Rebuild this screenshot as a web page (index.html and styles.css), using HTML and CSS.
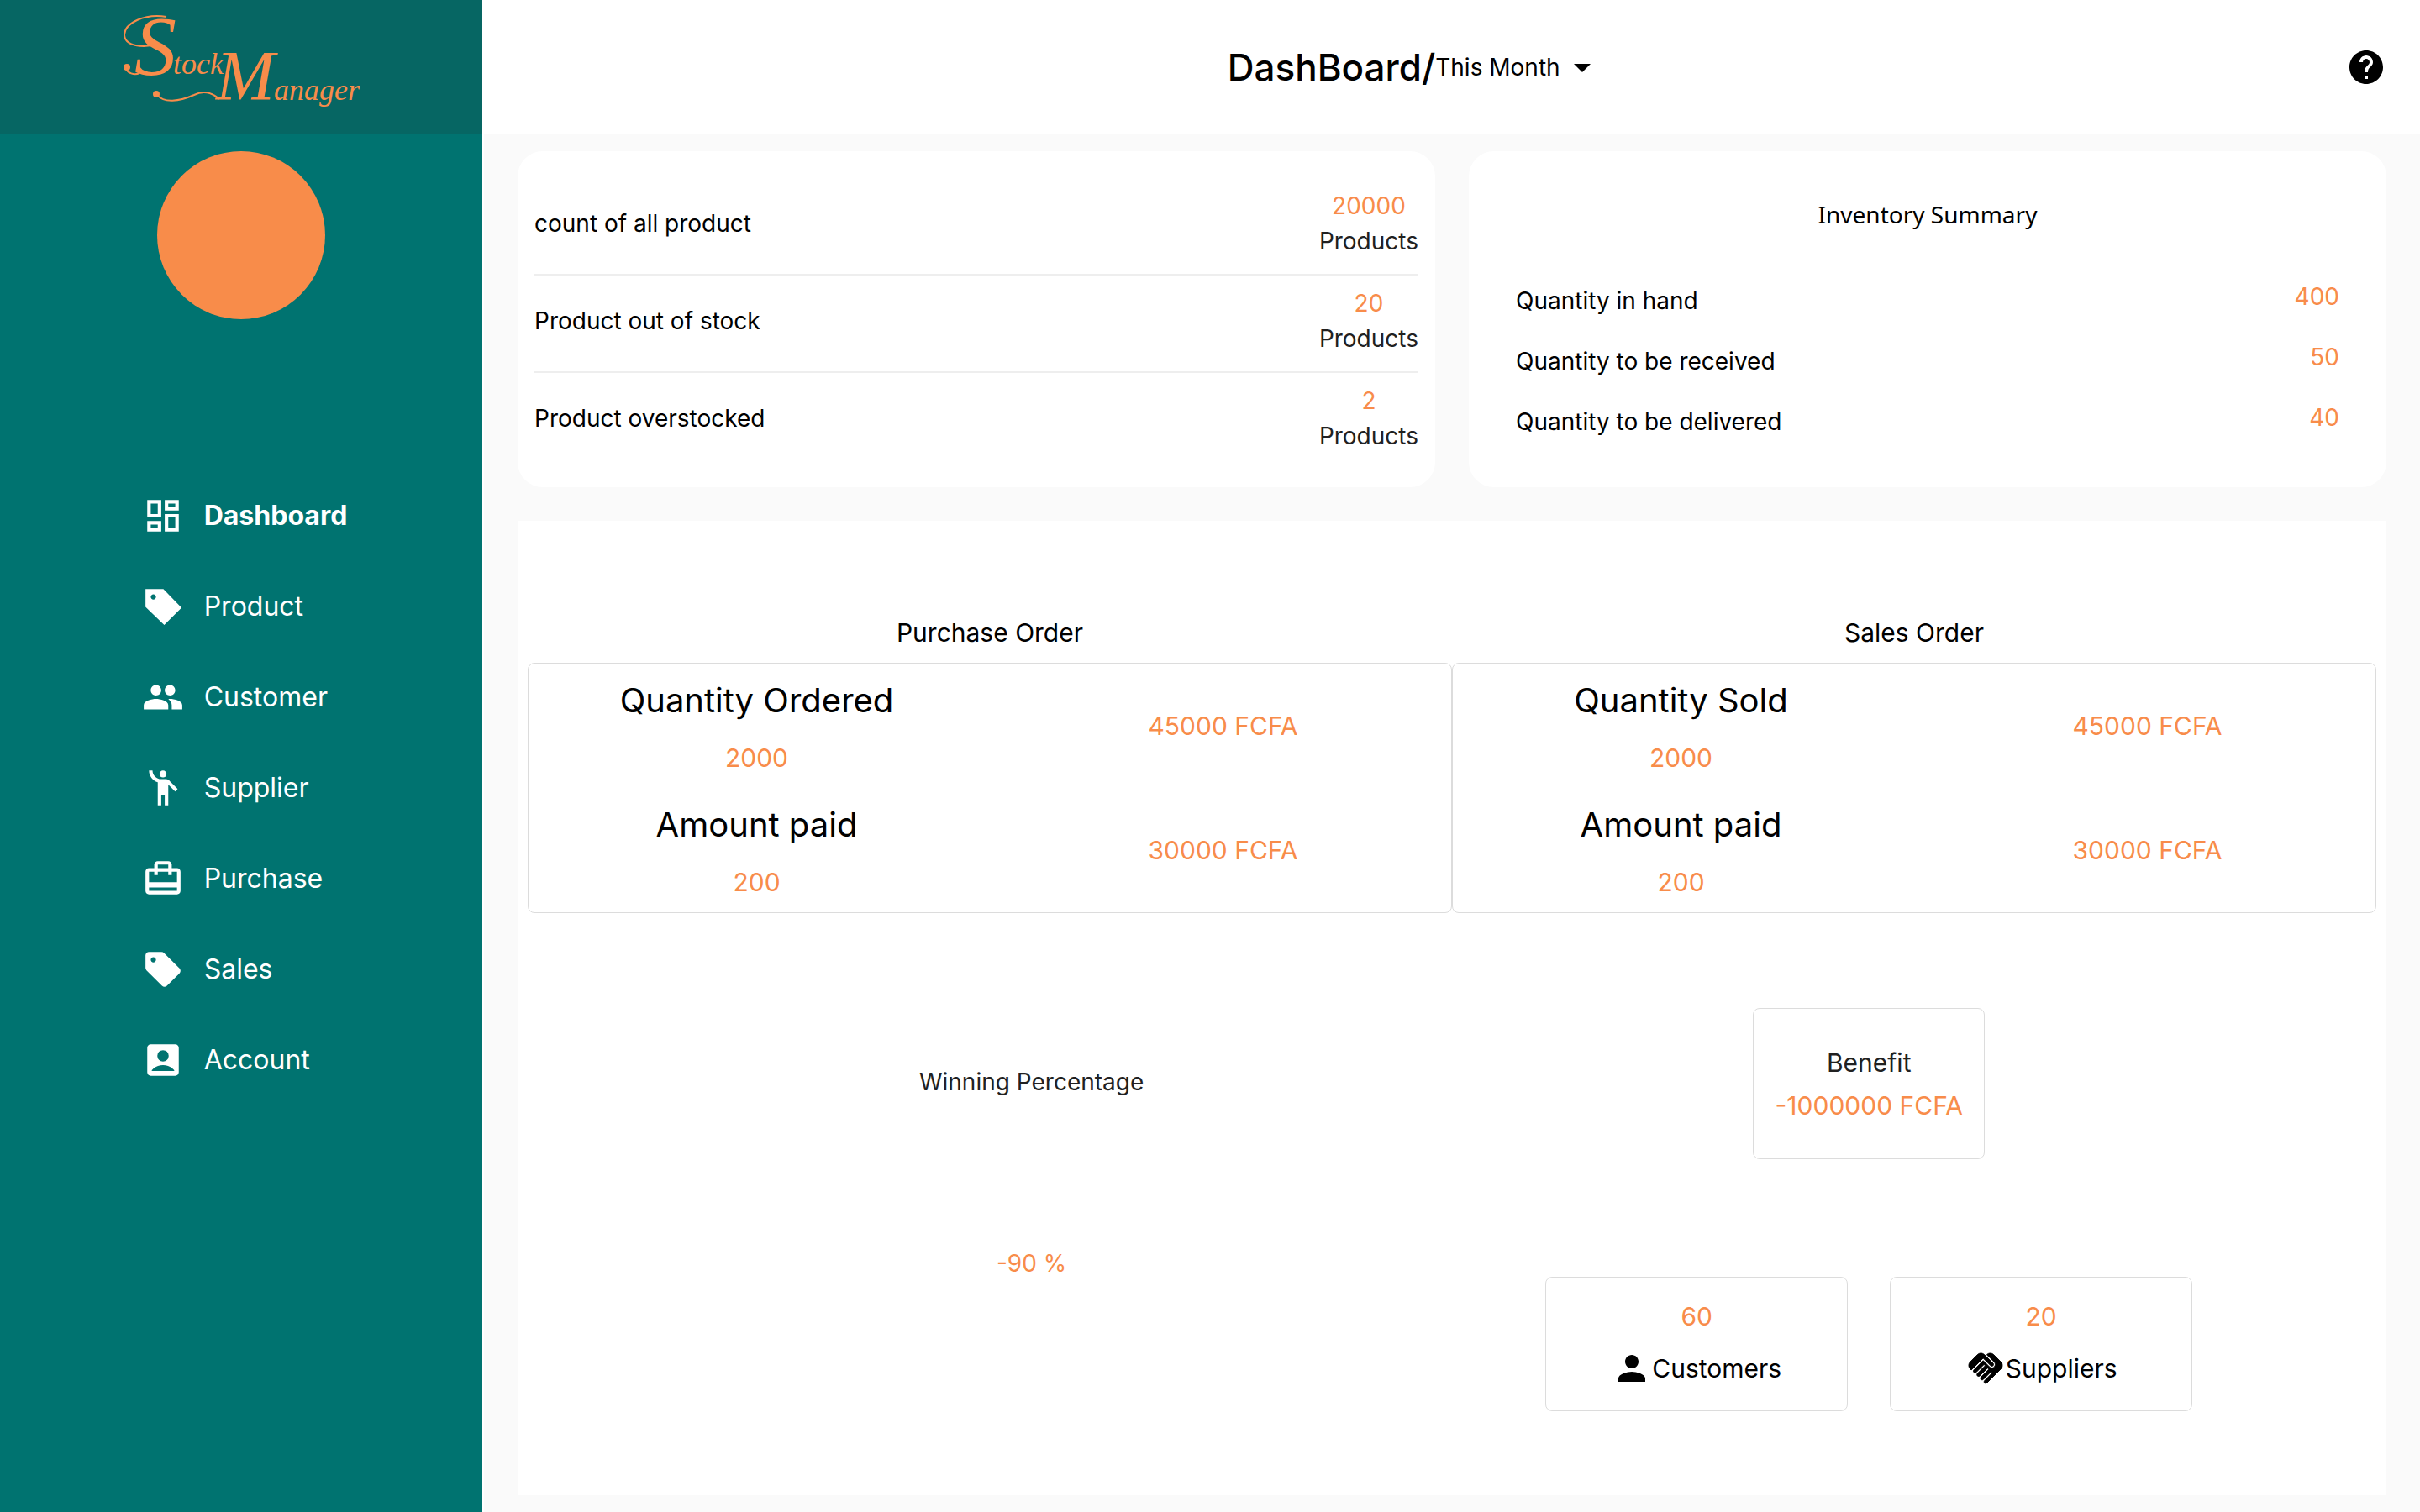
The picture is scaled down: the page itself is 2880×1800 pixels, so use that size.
FILE: index.html
```html
<!DOCTYPE html>
<html lang="en">
<head>
<meta charset="utf-8">
<meta name="viewport" content="width=device-width, initial-scale=1">
<title>Stock Manager</title>
<link rel="stylesheet" href="styles.css">
</head>
<body>
<div class="app">
  <aside class="sidebar">
    <a class="brand" href="#" aria-label="Stock Manager">
      <svg class="brand-logo" viewBox="0 0 290 150">
        <text class="logo-s" x="18" y="83">S</text>
        <text class="logo-word" x="64" y="83">tock</text>
        <text class="logo-m" x="115" y="114">M</text>
        <text class="logo-word" x="184" y="114">anager</text>
        <path class="logo-swash" d="M56 15C30 11 7 22 6 36c0 14 22 17 42 11"/>
        <path class="logo-swash" d="M24 82C18 85 9 82 8 76"/>
        <circle cx="9" cy="75" r="4"/>
        <path class="logo-swash" d="M45 108c8 10 26 8 44 0 10-5 20-4 30 5"/>
        <circle cx="44" cy="107" r="4"/>
      </svg>
    </a>
    <div class="avatar"></div>
    <nav class="nav" aria-label="Main">
      <a class="nav-link active" href="#"><svg class="nav-icon" viewBox="0 0 24 24"><path d="M19 5v2h-4V5h4M9 5v6H5V5h4m10 8v6h-4v-6h4M9 17v2H5v-2h4M21 3h-8v6h8V3zM11 3H3v10h8V3zm10 8h-8v10h8V11zm-10 4H3v6h8v-6z"/></svg>Dashboard</a>
      <a class="nav-link" href="#"><svg class="nav-icon" viewBox="0 0 24 24"><path d="M12.2 2H2v10.2l10.7 10.4 9.9-9.9L12.2 2zM6.5 8C5.67 8 5 7.33 5 6.5S5.67 5 6.5 5 8 5.67 8 6.5 7.33 8 6.5 8z"/></svg>Product</a>
      <a class="nav-link" href="#"><svg class="nav-icon" viewBox="0 0 24 24"><path d="M16 11c1.66 0 2.99-1.34 2.99-3S17.66 5 16 5c-1.66 0-3 1.34-3 3s1.34 3 3 3zm-8 0c1.66 0 2.99-1.34 2.99-3S9.66 5 8 5C6.34 5 5 6.34 5 8s1.34 3 3 3zm0 2c-2.33 0-7 1.17-7 3.5V19h14v-2.500c0-2.330-4.670-3.500-7-3.500zm8 0c-.29 0-.62.02-.97.05 1.160.84 1.970 1.970 1.970 3.450V19h6v-2.500c0-2.330-4.670-3.500-7-3.500z"/></svg>Customer</a>
      <a class="nav-link" href="#"><svg class="nav-icon" viewBox="0 0 24 24"><circle cx="12" cy="4" r="2"/><path d="M15.890 8.110C15.500 7.720 14.830 7 13.530 7h-2.540C8.240 6.990 6 4.750 6 2H4c0 3.160 2.110 5.840 5 6.710V22h2v-6h2v6h2V10.050L18.950 14l1.410-1.410-4.470-4.480z"/></svg>Supplier</a>
      <a class="nav-link" href="#"><svg class="nav-icon" viewBox="0 0 24 24"><path d="M20 6h-3V4c0-1.110-.89-2-2-2H9c-1.110 0-2 .89-2 2v2H4c-1.110 0-2 .89-2 2v11c0 1.110.89 2 2 2h16c1.110 0 2-.89 2-2V8c0-1.110-.89-2-2-2zM9 4h6v2H9V4zm11 15H4v-2h16v2zm0-5H4V8h3v2h2V8h6v2h2V8h3v6z"/></svg>Purchase</a>
      <a class="nav-link" href="#"><svg class="nav-icon" viewBox="0 0 24 24"><path d="M21.410 11.410l-8.830-8.830C12.210 2.210 11.700 2 11.170 2H4c-1.100 0-2 .9-2 2v7.170c0 .53.21 1.040.59 1.410l8.830 8.830c.78.78 2.050.78 2.830 0l7.170-7.170c.78-.78.78-2.040-.01-2.830zM6.500 8C5.670 8 5 7.330 5 6.500S5.670 5 6.500 5 8 5.670 8 6.500 7.330 8 6.500 8z"/></svg>Sales</a>
      <a class="nav-link" href="#"><svg class="nav-icon" viewBox="0 0 24 24"><path fill-rule="evenodd" d="M5 3h14c1.100 0 2 .9 2 2v14c0 1.100-.9 2-2 2H5c-1.100 0-2-.9-2-2V5c0-1.100.9-2 2-2zM12 6.300a3.250 3.250 0 1 0 0 6.500 3.250 3.250 0 1 0 0-6.500zM5.600 18.300h12.800v-.5C17 16 14.400 14.900 12 14.900s-5 1.100-6.400 2.900z"/></svg>Account</a>
    </nav>
  </aside>

  <div class="page">
    <header class="topbar">
      <div class="topbar-title">
        <h1 class="title">DashBoard/</h1>
        <div class="period">
          <select class="period-select" aria-label="Period"><option>This Month</option></select>
          <svg class="period-arrow" viewBox="0 0 24 24"><path d="M7 10l5 5 5-5z"/></svg>
        </div>
      </div>
      <button class="help" type="button" aria-label="Help"><svg class="icon" viewBox="0 0 24 24"><path d="M12 2C6.480 2 2 6.480 2 12s4.480 10 10 10 10-4.480 10-10S17.520 2 12 2zm1 17h-2v-2h2v2zm2.070-7.750l-.9.92C13.450 12.900 13 13.500 13 15h-2v-.5c0-1.100.45-2.100 1.170-2.830l1.240-1.260c.37-.36.59-.86.59-1.410 0-1.100-.9-2-2-2s-2 .9-2 2H8c0-2.210 1.790-4 4-4s4 1.790 4 4c0 .88-.36 1.680-.93 2.250z"/></svg></button>
    </header>

    <main class="content">
      <div class="summary">
        <section class="card stock">
          <div class="stock-row"><span>count of all product</span><div class="stock-value"><span class="accent">20000</span><span class="muted">Products</span></div></div>
          <div class="stock-row"><span>Product out of stock</span><div class="stock-value"><span class="accent">20</span><span class="muted">Products</span></div></div>
          <div class="stock-row"><span>Product overstocked</span><div class="stock-value"><span class="accent">2</span><span class="muted">Products</span></div></div>
        </section>
        <section class="card inventory">
          <h2 class="inventory-title">Inventory Summary</h2>
          <div class="inventory-list">
            <div class="inventory-row"><span class="inventory-label">Quantity in hand</span><span class="inventory-value">400</span></div>
            <div class="inventory-row"><span class="inventory-label">Quantity to be received</span><span class="inventory-value">50</span></div>
            <div class="inventory-row"><span class="inventory-label">Quantity to be delivered</span><span class="inventory-value">40</span></div>
          </div>
        </section>
      </div>

      <section class="panel">
        <div class="orders">
          <section class="order">
            <h2 class="order-title">Purchase Order</h2>
            <div class="order-box">
              <div class="order-item"><h3 class="order-name">Quantity Ordered</h3><span class="amount">2000</span></div>
              <span class="amount">45000 FCFA</span>
              <div class="order-item"><h3 class="order-name">Amount paid</h3><span class="amount">200</span></div>
              <span class="amount">30000 FCFA</span>
            </div>
          </section>
          <section class="order">
            <h2 class="order-title">Sales Order</h2>
            <div class="order-box">
              <div class="order-item"><h3 class="order-name">Quantity Sold</h3><span class="amount">2000</span></div>
              <span class="amount">45000 FCFA</span>
              <div class="order-item"><h3 class="order-name">Amount paid</h3><span class="amount">200</span></div>
              <span class="amount">30000 FCFA</span>
            </div>
          </section>
        </div>

        <div class="results">
          <div class="winning">
            <span class="muted">Winning Percentage</span>
            <span class="accent">-90 %</span>
          </div>
          <div class="totals">
            <div class="box benefit"><span class="benefit-label">Benefit</span><span class="amount">-1000000 FCFA</span></div>
            <div class="people">
              <div class="box person"><span class="amount">60</span><span class="person-label"><svg class="icon" viewBox="0 0 24 24"><path d="M12 12c2.210 0 4-1.790 4-4s-1.790-4-4-4-4 1.790-4 4 1.790 4 4 4zm0 2c-2.670 0-8 1.340-8 4v2h16v-2c0-2.660-5.330-4-8-4z"/></svg>Customers</span></div>
              <div class="box person"><span class="amount">20</span><span class="person-label"><svg class="icon" viewBox="0 0 24 24"><path stroke="currentColor" stroke-width=".45" stroke-linejoin="round" d="M16.480 10.410c-.39.39-1.040.39-1.430 0l-4.470-4.460-7.050 7.040-.66-.63c-1.170-1.170-1.170-3.070 0-4.240l4.240-4.240c1.170-1.170 3.070-1.170 4.240 0L16.480 9c.39.39.39 1.020 0 1.410zm.7-2.120c.78.78.78 2.050 0 2.830-1.270 1.270-2.610.22-2.830 0l-3.760-3.760-5.570 5.570c-.39.39-.39 1.020 0 1.410.39.39 1.020.39 1.420 0l4.620-4.620.71.71-4.620 4.620c-.39.39-.39 1.020 0 1.410.39.39 1.020.39 1.420 0l4.620-4.620.71.71-4.620 4.620c-.39.39-.39 1.020 0 1.410.39.39 1.020.39 1.410 0l4.620-4.620.71.71-4.620 4.620c-.39.39-.39 1.020 0 1.410.39.39 1.020.39 1.410 0l8.320-8.340c1.170-1.170 1.170-3.070 0-4.240l-4.240-4.240c-1.150-1.150-3.010-1.170-4.180-.06l4.470 4.470z"/></svg>Suppliers</span></div>
            </div>
          </div>
        </div>
      </section>
    </main>
  </div>
</div>
</body>
</html>
```
FILE: styles.css
```css
*, *::before, *::after { box-sizing: border-box; }

body {
  margin: 0;
  background: #fafafa;
  color: #000;
  font-family: Inter, "Liberation Sans", sans-serif;
  font-size: 28px;
  line-height: 42px;
}

h1, h2, h3 { margin: 0; font-weight: 400; }
svg { display: block; fill: currentColor; flex: none; }
.icon { width: 48px; height: 48px; }

.app { display: grid; grid-template-columns: 20% 1fr; min-height: 100vh; }

/* Sidebar */
.sidebar {
  display: flex;
  flex-direction: column;
  align-items: center;
  background: #007370;
  border-right: 2px solid #fff;
  color: #fff;
}
.brand {
  align-self: stretch;
  display: flex;
  justify-content: center;
  height: 160px;
  padding-top: 5px;
  background: #066663;
  color: #f88c4a;
}
.brand-logo {
  width: 290px;
  height: 150px;
  overflow: visible;
  font-family: "Liberation Serif", serif;
  font-style: italic;
}
.logo-s { font-size: 100px; }
.logo-m { font-size: 84px; }
.logo-word { font-size: 36px; }
.logo-swash { fill: none; stroke: currentColor; stroke-width: 2; }
.avatar { width: 200px; height: 200px; margin-top: 20px; border-radius: 50%; background: #f88c4a; }
.nav { display: flex; flex-direction: column; gap: 48px; margin-top: 204px; padding-left: 8px; }
.nav-link {
  display: flex;
  align-items: center;
  gap: 24px;
  height: 60px;
  color: #fff;
  font-size: 32px;
  text-decoration: none;
}
.nav-link.active { font-weight: 700; }
.nav-icon { width: 50px; height: 50px; }

/* Top bar */
.page { display: flex; flex-direction: column; min-width: 0; }
.topbar {
  display: flex;
  align-items: center;
  height: 160px;
  padding: 0 40px;
  background: #fff;
}
.topbar-title { flex: 1; display: flex; align-items: center; justify-content: center; }
.title { font-size: 44px; font-weight: 500; }
.period { position: relative; display: flex; align-items: center; }
.period-select {
  appearance: none;
  padding: 0 90px 0 0;
  border: 0;
  background: transparent;
  color: #000;
  font: inherit;
}
.period-arrow { position: absolute; right: 40px; width: 48px; height: 48px; pointer-events: none; }
.help { padding: 0; border: 0; background: none; color: #000; }

/* Content */
.content { flex: 1; display: flex; flex-direction: column; gap: 40px; padding: 20px 40px; }
.summary { display: grid; grid-template-columns: 1fr 1fr; gap: 40px; }
.card { min-height: 400px; border-radius: 30px; background: #fff; }
.accent, .amount, .inventory-value { color: #f88c4a; }
.muted, .benefit-label { color: #212121; }

.stock { padding: 32px 20px 20px; }
.stock-row {
  display: flex;
  align-items: center;
  justify-content: space-between;
  padding: 12px 0 18px;
  border-bottom: 2px solid #eee;
}
.stock-row:last-child { border-bottom: 0; }
.stock-value { display: flex; flex-direction: column; align-items: center; }

.inventory { padding: 54px 56px 20px; }
.inventory-title { font-size: 28px; font-family: "Noto Sans", sans-serif; text-align: center; }
.inventory-list { display: flex; flex-direction: column; gap: 20px; margin-top: 56px; }
.inventory-row { display: flex; align-items: flex-start; justify-content: space-between; }
.inventory-label { line-height: 52px; }

.panel { flex: 1; padding: 112px 12px 100px; background: #fff; }
.orders { display: grid; grid-template-columns: 1fr 1fr; }
.order-title { margin-bottom: 15px; font-size: 30px; text-align: center; }
.order-box, .box { border: 1px solid #dcdcdc; border-radius: 8px; }
.order-box {
  display: grid;
  grid-template-columns: 1fr 1fr;
  grid-auto-rows: 148px;
  column-gap: 12px;
  align-items: center;
  justify-items: center;
}
.order-item { display: flex; flex-direction: column; align-items: center; gap: 20px; }
.order-name { font-size: 40px; line-height: 56px; }
.amount { font-size: 30px; line-height: 40px; }

.results { display: grid; grid-template-columns: 55fr 45fr; margin: 113px -12px 0; }
.winning { display: flex; flex-direction: column; align-items: center; gap: 174px; padding-top: 67px; }
.totals { justify-self: start; display: flex; flex-direction: column; align-items: center; gap: 140px; }
.box { display: flex; flex-direction: column; align-items: center; justify-content: center; }
.benefit { min-width: 276px; height: 180px; gap: 10px; }
.benefit-label { font-size: 30px; }
.people { display: flex; gap: 50px; }
.person { width: 360px; height: 160px; gap: 18px; }
.person-label { display: flex; align-items: center; font-size: 30px; }
```
